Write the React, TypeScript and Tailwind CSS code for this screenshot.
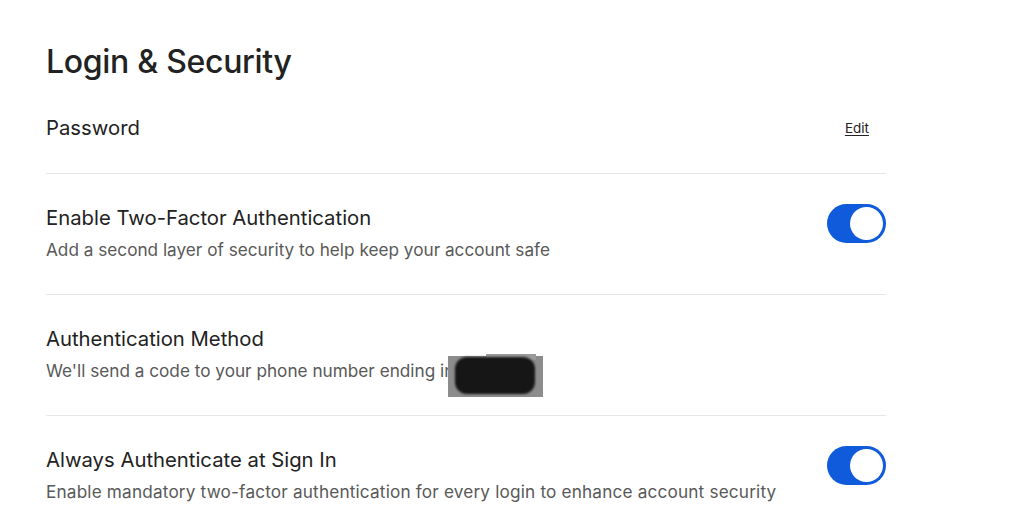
function Toggle() {
  return (
    <div className="flex h-[39px] w-[59px] shrink-0 items-center justify-end rounded-full bg-[#0f5bdc] p-[3px]">
      <div className="h-[33px] w-[33px] rounded-full bg-white" />
    </div>
  );
}

function Row({ title, desc, toggle, wide }: { title: string; desc: React.ReactNode; toggle?: boolean; wide?: boolean }) {
  return (
    <div className="flex items-start justify-between border-t border-[#e6e6e6] pb-[29px] pt-[29px]">
      <div className="flex flex-col">
        <div className="text-[20.3px] leading-[30px] text-[#222222]">{title}</div>
        <div className={wide ? "mt-[2px] text-[17.2px] leading-[30px] tracking-[0.17px] text-[#595959]" : "mt-[2px] text-[17.2px] leading-[30px] text-[#595959]"}>
          {desc}
        </div>
      </div>
      {toggle && <div className="mt-[1px]"><Toggle /></div>}
    </div>
  );
}

export default function App() {
  return (
    <div className="min-h-[531px] w-[1016px] bg-white pl-[46px] pt-[43px]" style={{ fontFamily: "Inter, 'Noto Sans', sans-serif" }}>
      <div className="w-[840px]">
        <h1 className="text-[32px] font-medium leading-[38px] tracking-[-0.3px] text-[#222222]">Login &amp; Security</h1>

        <div className="flex items-center justify-between pb-[30px] pt-[32px]">
          <div className="text-[20.3px] leading-[30px] text-[#222222]">Password</div>
          <a href="#" className="mr-[17px] text-[13.5px] text-[#222222] underline underline-offset-2">Edit</a>
        </div>

        <Row
          title="Enable Two-Factor Authentication"
          desc="Add a second layer of security to help keep your account safe"
          toggle
        />
        <Row
          title="Authentication Method"
          desc={
            <span className="relative">
              We'll send a code to your phone number ending in
              {/* redacted digits */}
              <span className="absolute left-[402px] top-[-4px] h-[41px] w-[95px] bg-[#8c8c8c]" />
              <span className="absolute left-[440px] top-[-6px] h-[6px] w-[50px] bg-[#9a9a9a]" />
              <span className="absolute left-[409px] top-[-3px] h-[37px] w-[80px] rounded-[12px] bg-[#161616] blur-[1px]" />
            </span>
          }
        />
        <Row
          title="Always Authenticate at Sign In"
          desc="Enable mandatory two-factor authentication for every login to enhance account security"
          toggle
          wide
        />
      </div>
    </div>
  );
}
